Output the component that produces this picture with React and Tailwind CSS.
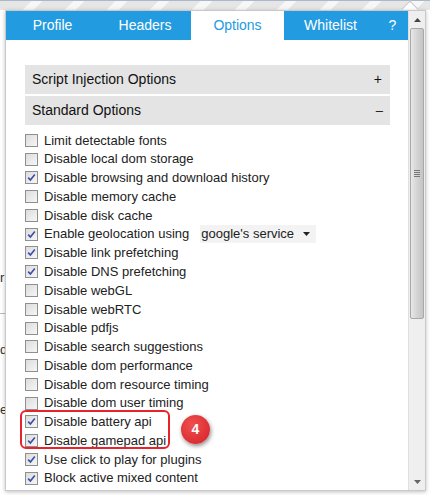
import React from 'react';

const options = [
  { label: 'Limit detectable fonts', checked: false },
  { label: 'Disable local dom storage', checked: false },
  { label: 'Disable browsing and download history', checked: true },
  { label: 'Disable memory cache', checked: false },
  { label: 'Disable disk cache', checked: false },
  { label: 'Enable geolocation using', checked: true, select: true },
  { label: 'Disable link prefetching', checked: true },
  { label: 'Disable DNS prefetching', checked: true },
  { label: 'Disable webGL', checked: false },
  { label: 'Disable webRTC', checked: false },
  { label: 'Disable pdfjs', checked: false },
  { label: 'Disable search suggestions', checked: false },
  { label: 'Disable dom performance', checked: false },
  { label: 'Disable dom resource timing', checked: false },
  { label: 'Disable dom user timing', checked: false },
  { label: 'Disable battery api', checked: true },
  { label: 'Disable gamepad api', checked: true },
  { label: 'Use click to play for plugins', checked: true },
  { label: 'Block active mixed content', checked: true },
];

function Checkbox({ checked }) {
  return (
    <span className="w-[13px] h-[13px] shrink-0 border border-[#8f8f8f] bg-gradient-to-br from-[#dcdcdc] to-[#f6f6f6] flex items-center justify-center">
      {checked && (
        <svg width="9" height="9" viewBox="0 0 9 9">
          <path d="M1.2 4.6 L3.4 7 L7.8 1.4" fill="none" stroke="#3b4ea3" strokeWidth="1.6" />
        </svg>
      )}
    </span>
  );
}

function Tab({ label, active, className }) {
  return (
    <div
      className={
        'h-full flex items-center justify-center text-[14px] ' +
        (active ? 'bg-white text-[#239be0]' : 'text-white') +
        ' ' +
        className
      }
    >
      {label}
    </div>
  );
}

export default function App() {
  return (
    <div
      className="w-[430px] h-[495px] relative overflow-hidden bg-white"
      style={{ fontFamily: '"Liberation Sans", Arial, sans-serif' }}
    >
      {/* browser chrome stripes */}
      <div className="h-[10px] border-t border-[#aab8cc] bg-[repeating-linear-gradient(135deg,#e6e6e6_0px,#e6e6e6_22px,#f7f7f7_22px,#f7f7f7_30px)]" />

      {/* page text peeking behind the popup */}
      <div className="absolute left-0 top-[268px] text-[13px] text-[#333]">r</div>
      <div className="absolute left-0 top-[313px] w-[5px] h-px bg-[#bbb]" />
      <div className="absolute left-0 top-[340px] text-[13px] text-[#333]">d</div>
      <div className="absolute left-0 top-[400px] text-[13px] text-[#333]">e</div>

      {/* popup notch */}
      <div className="absolute left-[404px] top-[3px] w-[12px] h-[12px] rotate-45 bg-white border-l border-t border-[#c8c8c8]" />

      <div className="absolute left-[5px] top-[10px] w-[421px] h-[481px] flex bg-white border border-[#c9c9c9] shadow-[0_1px_4px_rgba(0,0,0,0.25)]">
        <div className="flex-1 flex flex-col min-w-0">
          <div className="h-[29px] flex bg-[#229be0]">
            <Tab label="Profile" className="w-[93px]" />
            <Tab label="Headers" className="w-[92px]" />
            <Tab label="Options" active className="w-[93px]" />
            <Tab label="Whitelist" className="w-[93px]" />
            <Tab label="?" className="flex-1" />
          </div>

          <div className="pl-[19px] pr-[18px] pt-[25px]">
            <div className="h-[29px] bg-[#e4e4e4] flex items-center justify-between px-[7px] text-[14px] text-[#111]">
              <span>Script Injection Options</span>
              <span className="pr-[1px]">+</span>
            </div>
            <div className="mt-[2px] h-[29px] bg-[#e4e4e4] flex items-center justify-between px-[7px] text-[14px] text-[#111]">
              <span>Standard Options</span>
              <span className="text-[13px]">&ndash;</span>
            </div>

            <div className="pt-[6px] flex flex-col">
              {options.map((o, i) => (
                <div key={i} className="h-[18.78px] flex items-center gap-[6px] text-[13px] text-[#222]">
                  <Checkbox checked={o.checked} />
                  <span className="whitespace-nowrap">{o.label}</span>
                  {o.select && (
                    <span className="ml-[5px] h-[18px] w-[116px] bg-[#f3f3f3] flex items-center justify-between pl-[1px] pr-[6px]">
                      <span>google's service</span>
                      <svg width="7" height="4" viewBox="0 0 7 4">
                        <path d="M0 0 L7 0 L3.5 4 Z" fill="#222" />
                      </svg>
                    </span>
                  )}
                </div>
              ))}
            </div>
          </div>
        </div>

        {/* scrollbar */}
        <div className="w-[17px] shrink-0 bg-[#efefef] border-l border-[#e0e0e0] flex flex-col items-center">
          <div className="h-[17px] flex items-center justify-center">
            <svg width="7" height="4" viewBox="0 0 7 4">
              <path d="M3.5 0 L7 4 L0 4 Z" fill="#444" />
            </svg>
          </div>
          <div className="w-[14px] h-[291px] rounded-[2px] border border-[#a8a8a8] bg-gradient-to-r from-[#e8e8e8] via-[#d4d4d4] to-[#c4c4c4] flex items-center justify-center">
            <div className="flex flex-col gap-[1px]">
              <div className="w-[6px] h-px bg-[#777]" />
              <div className="w-[6px] h-px bg-[#777]" />
              <div className="w-[6px] h-px bg-[#777]" />
              <div className="w-[6px] h-px bg-[#777]" />
            </div>
          </div>
          <div className="flex-1" />
          <div className="h-[17px] flex items-center justify-center">
            <svg width="7" height="4" viewBox="0 0 7 4">
              <path d="M0 0 L7 0 L3.5 4 Z" fill="#666" />
            </svg>
          </div>
        </div>
      </div>

      {/* annotation */}
      <div className="absolute left-[20px] top-[410px] w-[150px] h-[39px] rounded-[6px] border-2 border-[#e8232a]" />
      <div className="absolute left-[181px] top-[415px] w-[29px] h-[29px] rounded-full bg-[radial-gradient(circle_at_40%_35%,#f0504f,#d41f26)] shadow-[1px_2px_4px_rgba(0,0,0,0.45)] flex items-center justify-center text-white text-[14px] font-bold">
        4
      </div>
    </div>
  );
}
